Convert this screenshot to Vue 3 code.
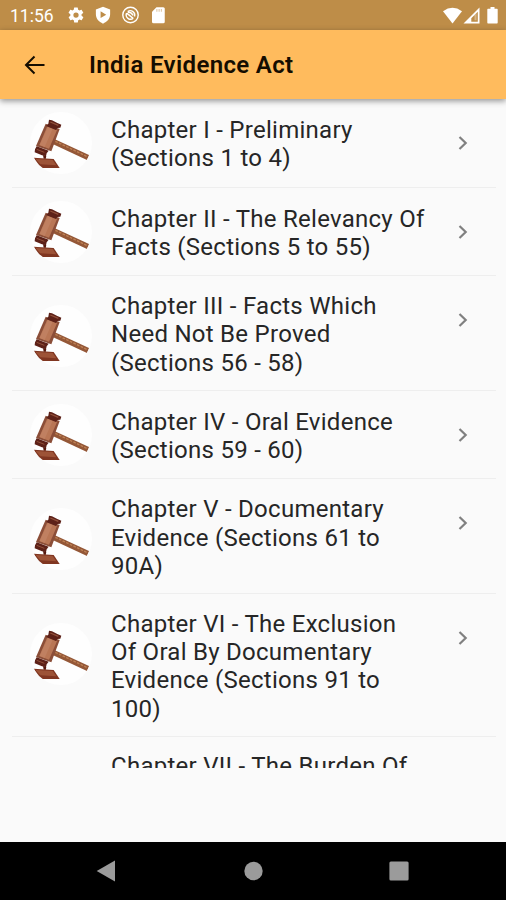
<script setup>
const chapters = [
  { lines: ['Chapter I - Preliminary', '(Sections 1 to 4)'] },
  { lines: ['Chapter II - The Relevancy Of', 'Facts (Sections 5 to 55)'] },
  { lines: ['Chapter III - Facts Which', 'Need Not Be Proved', '(Sections 56 - 58)'] },
  { lines: ['Chapter IV - Oral Evidence', '(Sections 59 - 60)'] },
  { lines: ['Chapter V - Documentary', 'Evidence (Sections 61 to', '90A)'] },
  { lines: ['Chapter VI - The Exclusion', 'Of Oral By Documentary', 'Evidence (Sections 91 to', '100)'] },
]
</script>

<template>
  <div class="screen">
    <header class="status">
      <span class="clock">11:56</span>
      <div class="left-icons">
        <svg width="18" height="18" viewBox="0 0 24 24"><path fill="#fff" fill-rule="evenodd" d="M19.4 13a7.5 7.5 0 0 0 0-2l2.1-1.7c.2-.1.2-.4.1-.6l-2-3.5c-.1-.2-.4-.3-.6-.2l-2.5 1a7.300 7.300 0 0 0-1.700-1l-.4-2.600a.5.5 0 0 0-.5-.4h-4a.5.5 0 0 0-.5.4L9 5.100a7.700 7.700 0 0 0-1.700 1l-2.500-1c-.2-.1-.5 0-.6.200l-2 3.400c-.1.200-.1.500.1.600L4.500 11a7.900 7.900 0 0 0 0 2l-2.100 1.600c-.2.200-.2.400-.1.600l2 3.500c.1.200.4.300.6.200l2.500-1c.5.400 1.100.7 1.700 1l.4 2.600c0 .3.200.5.500.5h4c.3 0 .5-.2.500-.5l.4-2.600c.6-.3 1.200-.6 1.700-1l2.500 1c.2.100.5 0 .6-.200l2-3.500c.1-.2.100-.4-.1-.6zM12 15.500a3.500 3.500 0 1 1 0-7 3.500 3.500 0 0 1 0 7z" /></svg>
        <svg width="18" height="18" viewBox="0 0 24 24"><path fill="#fff" fill-rule="evenodd" d="M12 1 21.500 4.500V11c0 6-4 10-9.500 12.500C6.500 21 2.500 17 2.500 11V4.500zM8.800 7v9l7.500-4.500z" /></svg>
        <svg width="19" height="18" viewBox="0 0 24 24"><g fill="none" stroke="#fff"><circle cx="12" cy="12" r="10.300" stroke-width="1.900" /><path stroke-width="1.900" d="M6.800 9.500a5.800 5.800 0 0 0 9 6.800M8.300 7.500a5.800 5.800 0 0 1 9 6.500M7 9.500l8.500 7M8.500 8.500q4-1 7 4" /></g></svg>
        <svg width="18" height="18" viewBox="0 0 24 24"><path fill="#fff" d="M10 1.500h9a2 2 0 0 1 2 2V21a2 2 0 0 1-2 2H6a2 2 0 0 1-2-2V7.500z" /><path stroke="#be8d48" stroke-width="1.400" d="M10.500 4v3.500M13.500 4v3.500M16.500 4v3.500" opacity=".5" /></svg>
      </div>
      <div class="right-icons">
        <svg width="19" height="17" viewBox="0 0 19 17"><path fill="#fff" d="M0 4.300Q9.500-2.600 19 4.300L9.500 16.500z" /></svg>
        <svg width="17" height="17" viewBox="0 0 17 17"><path fill="#fff" fill-rule="evenodd" d="M16.500.5v16H.5zM14.800 4.800 8.300 11.300v3.500h6.500z" /><path fill="#fff" opacity=".35" d="M11.500 8.200v5h2v-7z" /></svg>
        <svg class="battery" width="11" height="17" viewBox="0 0 11 17"><path fill="#fff" d="M3.500 0h4v1.800H10q.7 0 .7.8v13q0 .9-.7.9H1q-.7 0-.7-.9v-13q0-.8.7-.8h2.500z" /></svg>
      </div>
    </header>

    <div class="appbar">
      <svg class="back" width="22" height="20" viewBox="0 0 22 20"><path d="M20.500 10H2.500M10.500 1.500 2 10l8.500 8.500" fill="none" stroke="#150d00" stroke-width="2" /></svg>
      <h1>India Evidence Act</h1>
    </div>

    <main class="list">
      <article v-for="(c, i) in chapters" :key="i" class="row" :class="'rows-' + c.lines.length">
        <div class="avatar">
          <svg width="62" height="62" viewBox="30 21 186 186">
            <path d="M103 102 207 150 201 165 98 117z" fill="#945737" />
            <path d="M106 109 202 155" stroke="#bd8054" stroke-width="4" stroke-dasharray="8 4" />
            <path d="M77 56 119 72 94 139 48 123z" fill="#8b4e38" />
            <path d="M82 64 111 75 87 131 58 120z" fill="#b97655" />
            <path d="M84 66 98 71 74 126 59 120z" fill="#c08061" />
            <path d="M87 44 96 46 112 54 124 59 121 68 112 69 108 75 78 63 85 56z" fill="#5d2118" />
            <path d="M91 51 115 61" stroke="#91503a" stroke-width="4" />
            <path d="M50 124 86 137 80 145 78 154 66 151 44 142 45 133z" fill="#5d2118" />
            <path d="M50 133 73 142" stroke="#91503a" stroke-width="3" />
            <path d="M69 150 79 154 77 162 71 161z" fill="#55190f" />
            <path d="M41 158 101 162 119 189 65 189 54 179z" fill="#803621" />
            <path d="M47 162 98 165 109 181 61 178z" fill="#9d5337" />
          </svg>
        </div>
        <p class="title"><span v-for="line in c.lines" :key="line">{{ line }}</span></p>
        <svg class="chevron" width="12" height="16" viewBox="0 0 12 16"><path d="M2.500 2 8.700 8l-6.200 6" fill="none" stroke="#808080" stroke-width="2.200" /></svg>
      </article>
      <article class="row partial">
        <div class="blank"></div>
        <p class="title"><span>Chapter VII - The Burden Of</span></p>
      </article>
    </main>

    <nav class="navbar">
      <svg width="20" height="22" viewBox="0 0 20 22"><path d="M.7 11 19 .5v21z" fill="#9b9b9b" /></svg>
      <svg width="20" height="20" viewBox="0 0 20 20"><circle cx="10.500" cy="10" r="9.200" fill="#9b9b9b" /></svg>
      <svg width="20" height="20" viewBox="0 0 20 20"><rect x=".4" y=".4" width="19.200" height="19.200" rx="1.500" fill="#9b9b9b" /></svg>
    </nav>
  </div>
</template>

<style>
body { margin: 0; background: #fafafa; }
</style>

<style scoped>
.screen { width: 506px; height: 900px; display: flex; flex-direction: column; background: #fafafa; font-family: Roboto, "Liberation Sans", sans-serif; overflow: hidden; }
svg { display: block; flex: none; }
.status { height: 30px; flex: none; box-sizing: border-box; padding: 0 8px 0 10px; background: #be8d48; display: flex; align-items: center; }
.clock { width: 57px; color: #fff; font-size: 17.500px; line-height: 30px; padding-top: 2px; box-sizing: border-box; }
.left-icons { display: flex; gap: 9px; }
.right-icons { display: flex; margin-left: auto; gap: 1px; }
.battery { margin-left: 6px; }
.appbar { height: 69px; flex: none; background: #ffbb5d; display: flex; align-items: center; padding-left: 24px; box-shadow: 0 2px 6px rgba(0, 0, 0, .42); position: relative; z-index: 1; }
.back { margin-right: 43px; }
h1 { margin: 0; font-size: 24px; font-weight: 600; letter-spacing: .35px; line-height: 30px; color: #150d00; }
.list { height: 669px; flex: none; padding: 0 10px 0 12px; overflow: hidden; }
.row { box-sizing: border-box; display: flex; align-items: flex-start; border-bottom: 1px solid #eee; }
.rows-2 { height: 88.500px; }
.rows-3 { height: 114.800px; }
.rows-4 { height: 142.700px; }
.avatar { width: 62px; height: 62px; flex: none; border-radius: 50%; background: #fefefe; overflow: hidden; margin: 13px 19px 0 18px; }
.rows-3 .avatar { margin-top: 29px; }
.rows-4 .avatar { margin-top: 28.500px; }
.title { margin: 17px 0 0; width: 335px; flex: none; font-size: 24px; font-weight: 400; line-height: 28.400px; letter-spacing: .27px; color: #262626; }
.rows-3 .title { margin-top: 16px; }
.rows-4 .title { margin-top: 15.500px; }
.title span { display: block; white-space: nowrap; }
.chevron { margin: 36px 0 0 11px; }
.partial { border-bottom: 0; }
.partial .title { margin-top: 15.500px; }
.blank { width: 99px; flex: none; }
.navbar { margin-top: auto; height: 58px; flex: none; box-sizing: border-box; padding: 0 97px 0 96px; background: #000; display: flex; align-items: center; justify-content: space-between; }
</style>
